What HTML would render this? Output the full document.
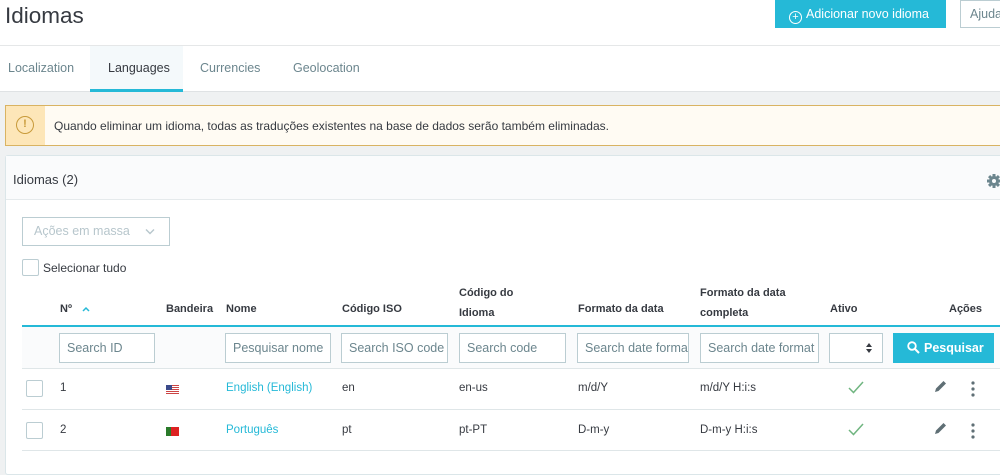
<!DOCTYPE html>
<html><head><meta charset="utf-8"><style>
*{box-sizing:border-box;margin:0;padding:0}
body{width:1000px;height:468px;overflow:hidden;background:#eff1f2;font-family:"Liberation Sans",sans-serif;color:#363a41;font-size:12px;position:relative}
.abs{position:absolute}
.hdr{left:0;top:0;width:1000px;height:46px;background:#fff;border-bottom:1px solid #e5e7e8}
.tabs{left:0;top:46px;width:1000px;height:46px;background:#fff;border-bottom:1px solid #dfe2e4}
.tab{position:absolute;top:0;height:46px;line-height:44px;font-size:12.5px;color:#6c868e}
.inp{position:absolute;top:333px;height:30px;border:1px solid #bbcdd2;background:#fff;color:#6c868e;font-size:12.5px;line-height:28px;padding-left:7px;overflow:hidden;white-space:nowrap}
.th{position:absolute;font-weight:bold;font-size:11px;color:#363a41;line-height:21px}
.td{position:absolute;font-size:11.5px;color:#363a41}
.cb{position:absolute;width:17px;height:17px;border:1px solid #bbcdd2;border-radius:2px;background:#fff}
</style></head><body>
<div class="abs hdr"></div>
<div class="abs" style="left:5px;top:3px;font-size:22.5px;color:#363a41">Idiomas</div>
<div class="abs" style="left:775px;top:0;width:171px;height:28px;background:#25b9d7;color:#fff;font-size:12.5px;line-height:28px;padding-left:14px"><span style="display:inline-block;width:13px;height:13px;border:1.5px solid #fff;border-radius:50%;font-size:11px;line-height:10px;text-align:center;vertical-align:-2px;margin-right:4px">+</span>Adicionar novo idioma</div>
<div class="abs" style="left:960px;top:0;width:50px;height:28px;border:1px solid #bbcdd2;background:#fff;color:#6c868e;font-size:12.5px;line-height:26px;padding-left:9px">Ajuda</div>
<div class="abs tabs"></div>
<div class="tab" style="left:8px;top:46px">Localization</div>
<div class="abs" style="left:90px;top:46px;width:93px;height:46px;background:#f4f9fb;border-bottom:3px solid #25b9d7"></div>
<div class="tab" style="left:108px;top:46px;color:#363a41">Languages</div>
<div class="tab" style="left:200px;top:46px">Currencies</div>
<div class="tab" style="left:293px;top:46px">Geolocation</div>
<div class="abs" style="left:5px;top:105px;width:1000px;height:41px;background:#fffbf3;border:1px solid #d9b362"></div>
<div class="abs" style="left:6px;top:106px;width:39px;height:39px;background:#fde6b8"></div>
<div class="abs" style="left:16px;top:116px;width:18px;height:18px;border:1.5px solid #c89a3a;border-radius:50%;color:#c89a3a;font-size:11px;line-height:15px;text-align:center;font-weight:bold">!</div>
<div class="abs" style="left:54px;top:119px;font-size:12px">Quando eliminar um idioma, todas as traduções existentes na base de dados serão também eliminadas.</div>
<div class="abs" style="left:5px;top:155px;width:1000px;height:320px;background:#fff;border:1px solid #dbe6e9;border-radius:3px"></div>
<div class="abs" style="left:6px;top:156px;width:994px;height:44px;background:#fafbfc;border-bottom:1px solid #e5eaec"></div>
<div class="abs" style="left:13px;top:172px;font-size:13px">Idiomas (2)</div>
<svg class="abs" style="left:987px;top:174px" width="14" height="14" viewBox="0 0 14 14"><g fill="#6c868e"><circle cx="7" cy="7" r="5"/><rect x="5.5" y="0" width="3" height="14"/><rect x="0" y="5.5" width="14" height="3"/><rect x="5.5" y="0" width="3" height="14" transform="rotate(45 7 7)"/><rect x="5.5" y="0" width="3" height="14" transform="rotate(-45 7 7)"/></g><circle cx="7" cy="7" r="2" fill="#fafbfc"/></svg>
<div class="abs" style="left:22px;top:217px;width:148px;height:29px;border:1px solid #bbcdd2;color:#b7c6cc;font-size:12.5px;line-height:27px;padding-left:11px">Ações em massa</div>
<svg class="abs" style="left:145px;top:228px" width="10" height="7" viewBox="0 0 10 7"><path d="M1 1.5L5 5.5L9 1.5" stroke="#b7c6cc" stroke-width="1.4" fill="none"/></svg>
<div class="cb" style="left:22px;top:259px"></div>
<div class="abs" style="left:43px;top:261px;font-size:12px">Selecionar tudo</div>
<div class="th" style="left:60px;top:299px">Nº</div>
<svg class="abs" style="left:82px;top:306px" width="8" height="6" viewBox="0 0 8 6"><path d="M1 5L4 2L7 5" stroke="#25b9d7" stroke-width="1.5" fill="none"/></svg>
<div class="th" style="left:166px;top:299px">Bandeira</div>
<div class="th" style="left:226px;top:299px">Nome</div>
<div class="th" style="left:342px;top:299px">Código ISO</div>
<div class="th" style="left:459px;top:286px;line-height:15px">Código do<br><span style="line-height:25px">Idioma</span></div>
<div class="th" style="left:578px;top:299px">Formato da data</div>
<div class="th" style="left:700px;top:286px;line-height:15px">Formato da data<br><span style="line-height:25px">completa</span></div>
<div class="th" style="left:830px;top:299px">Ativo</div>
<div class="th" style="left:949px;top:299px">Ações</div>
<div class="abs" style="left:22px;top:325px;width:978px;height:2px;background:#25b9d7"></div>
<div class="abs" style="left:22px;top:327px;width:978px;height:42px;background:#fafbfc;border-bottom:1px solid #dfe6e8"></div>
<div class="inp" style="left:59px;width:96px">Search ID</div>
<div class="inp" style="left:225px;width:106px">Pesquisar nome</div>
<div class="inp" style="left:341px;width:107px">Search ISO code</div>
<div class="inp" style="left:459px;width:107px">Search code</div>
<div class="inp" style="left:577px;width:112px">Search date forma</div>
<div class="inp" style="left:700px;width:119px">Search date format</div>
<div class="inp" style="left:829px;width:54px"></div>
<svg class="abs" style="left:866px;top:343px" width="6" height="10" viewBox="0 0 6 10"><path d="M0 4L3 0L6 4Z M0 6L3 10L6 6Z" fill="#363a41"/></svg>
<div class="abs" style="left:893px;top:333px;width:101px;height:30px;background:#25b9d7;color:#fff;font-size:12.5px;line-height:30px;padding-left:31px;font-weight:bold">Pesquisar</div>
<svg class="abs" style="left:907px;top:341px" width="13" height="13" viewBox="0 0 13 13"><circle cx="5" cy="5" r="3.8" stroke="#fff" stroke-width="1.8" fill="none"/><path d="M8 8L12 12" stroke="#fff" stroke-width="2"/></svg>
<div class="abs" style="left:22px;top:409px;width:978px;height:1px;background:#dfe6e8"></div>
<div class="abs" style="left:22px;top:450px;width:978px;height:1px;background:#dfe6e8"></div>
<div class="cb" style="left:26px;top:380px"></div><div class="cb" style="left:26px;top:422px"></div>
<div class="td" style="left:60px;top:382px">1</div><div class="td" style="left:60px;top:424px">2</div>
<div class="abs" style="left:166px;top:385px;width:13px;height:9px;background:repeating-linear-gradient(#c44 0 1px,#fff 1px 2px)"><div style="width:6px;height:5px;background:#3a4a8a"></div></div>
<div class="abs" style="left:166px;top:427px;width:13px;height:9px;background:linear-gradient(90deg,#2a7a2a 0 5px,#d22 5px)"></div>
<div class="td" style="left:226px;top:382px;color:#25b9d7">English (English)</div><div class="td" style="left:226px;top:424px;color:#25b9d7">Português</div>
<div class="td" style="left:342px;top:382px">en</div><div class="td" style="left:342px;top:424px">pt</div>
<div class="td" style="left:459px;top:382px">en-us</div><div class="td" style="left:459px;top:424px">pt-PT</div>
<div class="td" style="left:578px;top:382px">m/d/Y</div><div class="td" style="left:578px;top:424px">D-m-y</div>
<div class="td" style="left:700px;top:382px">m/d/Y H:i:s</div><div class="td" style="left:700px;top:424px">D-m-y H:i:s</div>
<svg class="abs" style="left:848px;top:381px" width="16" height="13" viewBox="0 0 16 13"><path d="M1 7L5.5 11.5L15 1" stroke="#70b580" stroke-width="1.5" fill="none"/></svg>
<svg class="abs" style="left:848px;top:423px" width="16" height="13" viewBox="0 0 16 13"><path d="M1 7L5.5 11.5L15 1" stroke="#70b580" stroke-width="1.5" fill="none"/></svg>
<svg class="abs" style="left:934px;top:380px" width="13" height="13" viewBox="0 0 13 13"><path d="M1 12L2 8.5L9.5 1L12 3.5L4.5 11Z" fill="#5f6f75"/></svg>
<svg class="abs" style="left:934px;top:422px" width="13" height="13" viewBox="0 0 13 13"><path d="M1 12L2 8.5L9.5 1L12 3.5L4.5 11Z" fill="#5f6f75"/></svg>
<svg class="abs" style="left:970px;top:381px" width="6" height="16" viewBox="0 0 6 16"><g fill="#5f6f75"><circle cx="3" cy="2" r="1.6"/><circle cx="3" cy="8" r="1.6"/><circle cx="3" cy="14" r="1.6"/></g></svg>
<svg class="abs" style="left:970px;top:423px" width="6" height="16" viewBox="0 0 6 16"><g fill="#5f6f75"><circle cx="3" cy="2" r="1.6"/><circle cx="3" cy="8" r="1.6"/><circle cx="3" cy="14" r="1.6"/></g></svg>
</body></html>
